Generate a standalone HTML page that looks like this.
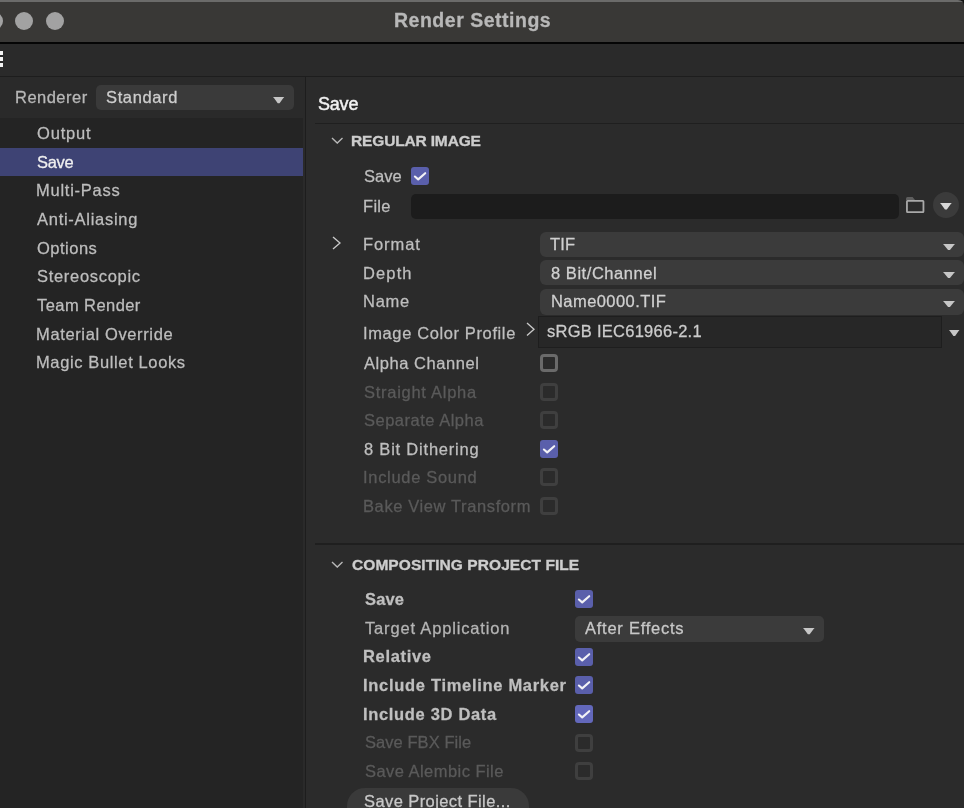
<!DOCTYPE html>
<html><head><meta charset="utf-8"><title>Render Settings</title>
<style>
html,body{margin:0;padding:0;width:964px;height:808px;overflow:hidden;background:#2b2b2b;}
body{position:relative;font-family:"Liberation Sans",sans-serif;}
.t{position:absolute;white-space:nowrap;-webkit-text-stroke:0.28px currentColor;will-change:transform;}
.b{position:absolute;display:block;}
</style></head><body>
<div class="b" style="left:0px;top:0px;width:964px;height:42px;background:#393836;border-radius:0px;"></div>
<div class="b" style="left:0px;top:0px;width:964px;height:2px;background:#6b6b6a;border-radius:0px;"></div>
<svg class="b" style="left:958px;top:0px" width="6" height="6"><path d="M0,0 L6,0 L6,6 Q6,0 0,0 Z" fill="#111"/></svg>
<div class="b" style="left:-15px;top:12px;width:18px;height:18px;background:#a2a2a2;border-radius:9px;"></div>
<div class="b" style="left:15px;top:12px;width:18px;height:18px;background:#a2a2a2;border-radius:9px;"></div>
<div class="b" style="left:45.7px;top:12px;width:18px;height:18px;background:#a2a2a2;border-radius:9px;"></div>
<div class="t" style="left:394.28px;top:9.24px;font-size:19.5px;line-height:23.4px;letter-spacing:0.51px;color:#b8b8b8;font-weight:700;">Render Settings</div>
<div class="b" style="left:0px;top:42px;width:964px;height:2px;background:#050505;border-radius:0px;"></div>
<div class="b" style="left:0px;top:44px;width:964px;height:32px;background:#2a2a2a;border-radius:0px;"></div>
<div class="b" style="left:0px;top:51.2px;width:3px;height:3.5px;background:#f2f2f2;border-radius:0px;"></div>
<div class="b" style="left:0px;top:57.2px;width:3px;height:3.5px;background:#f2f2f2;border-radius:0px;"></div>
<div class="b" style="left:0px;top:63.2px;width:3px;height:3.5px;background:#f2f2f2;border-radius:0px;"></div>
<div class="b" style="left:0px;top:76px;width:964px;height:1px;background:#1d1d1d;border-radius:0px;"></div>
<div class="b" style="left:0px;top:77px;width:305px;height:731px;background:#2a2a2a;border-radius:0px;"></div>
<div class="b" style="left:0px;top:118px;width:303px;height:690px;background:#242424;border-radius:0px;"></div>
<div class="b" style="left:305px;top:77px;width:1px;height:731px;background:#1d1d1d;border-radius:0px;"></div>
<div class="t" style="left:14.96px;top:87.68px;font-size:16.5px;line-height:19.8px;letter-spacing:0.48px;color:#b8b8b8;font-weight:400;">Renderer</div>
<div class="b" style="left:96px;top:84.7px;width:198px;height:25.8px;background:#3a3a3a;border-radius:5px;"></div>
<div class="t" style="left:106.48px;top:87.88px;font-size:16.5px;line-height:19.8px;letter-spacing:0.62px;color:#cdcdcd;font-weight:400;">Standard</div>
<svg class="b" style="left:272.4px;top:96px" width="13.3" height="8.2"><polygon points="1.00,1.00 12.30,1.00 11.17,2.24 7.55,7.20 5.75,7.20 2.13,2.24" fill="#c6c6c6"/></svg>
<div class="b" style="left:0px;top:148px;width:303px;height:27.5px;background:#3e4374;border-radius:0px;"></div>
<div class="t" style="left:37.16px;top:124.08px;font-size:16.5px;line-height:19.8px;letter-spacing:0.808px;color:#bdbdbd;font-weight:400;">Output</div>
<div class="t" style="left:37.16px;top:152.73px;font-size:16.5px;line-height:19.8px;letter-spacing:-0.293px;color:#f0f0f0;font-weight:400;">Save</div>
<div class="t" style="left:36.04px;top:181.38px;font-size:16.5px;line-height:19.8px;letter-spacing:0.749px;color:#bdbdbd;font-weight:400;">Multi-Pass</div>
<div class="t" style="left:37.44px;top:210.03px;font-size:16.5px;line-height:19.8px;letter-spacing:0.722px;color:#bdbdbd;font-weight:400;">Anti-Aliasing</div>
<div class="t" style="left:37.44px;top:238.68px;font-size:16.5px;line-height:19.8px;letter-spacing:0.5px;color:#bdbdbd;font-weight:400;">Options</div>
<div class="t" style="left:37.44px;top:267.33px;font-size:16.5px;line-height:19.8px;letter-spacing:0.691px;color:#bdbdbd;font-weight:400;">Stereoscopic</div>
<div class="t" style="left:37.44px;top:295.98px;font-size:16.5px;line-height:19.8px;letter-spacing:0.43px;color:#bdbdbd;font-weight:400;">Team Render</div>
<div class="t" style="left:36.04px;top:324.63px;font-size:16.5px;line-height:19.8px;letter-spacing:0.631px;color:#bdbdbd;font-weight:400;">Material Override</div>
<div class="t" style="left:36.04px;top:353.28px;font-size:16.5px;line-height:19.8px;letter-spacing:0.624px;color:#bdbdbd;font-weight:400;">Magic Bullet Looks</div>
<div class="b" style="left:306px;top:77px;width:658px;height:731px;background:#2b2b2b;border-radius:0px;"></div>
<div class="t" style="left:318.46px;top:93.76px;font-size:18px;line-height:21.6px;letter-spacing:-0.2px;color:#f2f2f2;font-weight:400;-webkit-text-stroke:0.45px currentColor;">Save</div>
<div class="b" style="left:315px;top:122.5px;width:649px;height:1.5px;background:#1f1f1f;border-radius:0px;"></div>
<svg class="b" style="left:331.1px;top:137.3px" width="12.5" height="7.1"><polyline points="1,1 6.25,6.1 11.5,1" fill="none" stroke="#b8b8b8" stroke-width="1.35"/></svg>
<div class="t" style="left:351.44px;top:132.23px;font-size:15.5px;line-height:18.6px;letter-spacing:-0.153px;color:#cdcdcd;font-weight:700;-webkit-text-stroke:0.35px currentColor;">REGULAR IMAGE</div>
<div class="t" style="left:364.16px;top:166.58px;font-size:16.5px;line-height:19.8px;letter-spacing:0.033px;color:#bebebe;font-weight:400;">Save</div>
<svg class="b" style="left:411px;top:166.5px" width="18" height="18"><rect x="0" y="0" width="18" height="18" rx="3" fill="#5a5fab"/><polyline points="3.9,9.5 7.2,12.4 14.2,6.2" fill="none" stroke="#f2f2f6" stroke-width="2.1" stroke-linecap="round" stroke-linejoin="round"/></svg>
<div class="t" style="left:363.46px;top:196.58px;font-size:16.5px;line-height:19.8px;letter-spacing:0.313px;color:#bebebe;font-weight:400;">File</div>
<div class="b" style="left:411px;top:194px;width:487.5px;height:25px;background:#1c1c1c;border-radius:5px;"></div>
<svg class="b" style="left:904px;top:195px" width="24" height="20"><path d="M2,5.2 L2,3.6 Q2,2.1 3.5,2.1 L8.6,2.1 L11.2,5.2 Z" fill="#5e5e5e"/><rect x="2.95" y="5.9" width="16.5" height="11.2" rx="0.6" fill="none" stroke="#a9a9a9" stroke-width="1.8"/></svg>
<div class="b" style="left:932.9000000000001px;top:191.7px;width:26.6px;height:26.6px;background:#3b3b3b;border-radius:13.3px;"></div>
<svg class="b" style="left:939.4px;top:201.6px" width="13.8" height="8.6"><polygon points="1.00,1.00 12.80,1.00 11.62,2.32 7.84,7.60 5.96,7.60 2.18,2.32" fill="#d8d8d8"/></svg>
<svg class="b" style="left:332.1px;top:235.5px" width="9" height="14"><polyline points="1,1 8,7.0 1,13" fill="none" stroke="#c8c8c8" stroke-width="1.35"/></svg>
<div class="t" style="left:363.12px;top:234.88px;font-size:16.5px;line-height:19.8px;letter-spacing:0.92px;color:#bebebe;font-weight:400;">Format</div>
<div class="b" style="left:540px;top:231.8px;width:424px;height:24.899999999999977px;background:#3b3b3b;border-radius:6px;"></div>
<div class="t" style="left:550.0px;top:234.88px;font-size:16.5px;line-height:19.8px;letter-spacing:0.22px;color:#d0d0d0;font-weight:400;">TIF</div>
<svg class="b" style="left:942px;top:242.8px" width="14" height="8.1"><polygon points="1.00,1.00 13.00,1.00 11.80,2.22 7.96,7.10 6.04,7.10 2.20,2.22" fill="#c6c6c6"/></svg>
<div class="t" style="left:363.12px;top:263.58px;font-size:16.5px;line-height:19.8px;letter-spacing:1.13px;color:#bebebe;font-weight:400;">Depth</div>
<div class="b" style="left:540px;top:260.2px;width:424px;height:25.30000000000001px;background:#3b3b3b;border-radius:6px;"></div>
<div class="t" style="left:550.66px;top:263.58px;font-size:16.5px;line-height:19.8px;letter-spacing:0.547px;color:#d0d0d0;font-weight:400;">8 Bit/Channel</div>
<svg class="b" style="left:942px;top:271.2px" width="14" height="8.1"><polygon points="1.00,1.00 13.00,1.00 11.80,2.22 7.96,7.10 6.04,7.10 2.20,2.22" fill="#c6c6c6"/></svg>
<div class="t" style="left:363.12px;top:291.88px;font-size:16.5px;line-height:19.8px;letter-spacing:0.733px;color:#bebebe;font-weight:400;">Name</div>
<div class="b" style="left:540px;top:289px;width:424px;height:25.5px;background:#3b3b3b;border-radius:6px;"></div>
<div class="t" style="left:550.62px;top:291.88px;font-size:16.5px;line-height:19.8px;letter-spacing:0.436px;color:#d0d0d0;font-weight:400;">Name0000.TIF</div>
<svg class="b" style="left:942px;top:300px" width="14" height="8.1"><polygon points="1.00,1.00 13.00,1.00 11.80,2.22 7.96,7.10 6.04,7.10 2.20,2.22" fill="#c6c6c6"/></svg>
<div class="t" style="left:363.3px;top:323.78px;font-size:16.5px;line-height:19.8px;letter-spacing:0.617px;color:#bebebe;font-weight:400;">Image Color Profile</div>
<svg class="b" style="left:526.3px;top:321.8px" width="9" height="14.5"><polyline points="1,1 8,7.25 1,13.5" fill="none" stroke="#c8c8c8" stroke-width="1.35"/></svg>
<div class="b" style="left:538.3px;top:316.3px;width:404.2px;height:31.3px;background:#272727;border-radius:0px;box-sizing:border-box;border:1.7px solid #1e1e1e;"></div>
<div class="t" style="left:546.5px;top:322.48px;font-size:16.5px;line-height:19.8px;letter-spacing:0.264px;color:#cccccc;font-weight:400;">sRGB IEC61966-2.1</div>
<svg class="b" style="left:947.8px;top:329px" width="12.5" height="7.8999999999999995"><polygon points="1.00,1.00 11.50,1.00 10.45,2.18 7.09,6.90 5.41,6.90 2.05,2.18" fill="#c6c6c6"/></svg>
<div class="t" style="left:363.66px;top:353.98px;font-size:16.5px;line-height:19.8px;letter-spacing:0.547px;color:#bebebe;font-weight:400;">Alpha Channel</div>
<svg class="b" style="left:540px;top:354.0px" width="18" height="18"><rect x="1.5" y="1.5" width="15" height="15" rx="2.5" fill="none" stroke="#6a6a6a" stroke-width="3"/></svg>
<div class="t" style="left:363.66px;top:382.60px;font-size:16.5px;line-height:19.8px;letter-spacing:0.726px;color:#5a5a5a;font-weight:400;">Straight Alpha</div>
<svg class="b" style="left:540px;top:382.62px" width="18" height="18"><rect x="1.5" y="1.5" width="15" height="15" rx="2.5" fill="none" stroke="#3f3f3f" stroke-width="3"/></svg>
<div class="t" style="left:363.66px;top:411.22px;font-size:16.5px;line-height:19.8px;letter-spacing:0.5px;color:#5a5a5a;font-weight:400;">Separate Alpha</div>
<svg class="b" style="left:540px;top:411.24px" width="18" height="18"><rect x="1.5" y="1.5" width="15" height="15" rx="2.5" fill="none" stroke="#3f3f3f" stroke-width="3"/></svg>
<div class="t" style="left:363.66px;top:439.84px;font-size:16.5px;line-height:19.8px;letter-spacing:0.79px;color:#bebebe;font-weight:400;">8 Bit Dithering</div>
<svg class="b" style="left:540px;top:439.86px" width="18" height="18"><rect x="0" y="0" width="18" height="18" rx="3" fill="#5a5fab"/><polyline points="3.9,9.5 7.2,12.4 14.2,6.2" fill="none" stroke="#f2f2f6" stroke-width="2.1" stroke-linecap="round" stroke-linejoin="round"/></svg>
<div class="t" style="left:362.96px;top:468.46px;font-size:16.5px;line-height:19.8px;letter-spacing:0.687px;color:#5a5a5a;font-weight:400;">Include Sound</div>
<svg class="b" style="left:540px;top:468.48px" width="18" height="18"><rect x="1.5" y="1.5" width="15" height="15" rx="2.5" fill="none" stroke="#3f3f3f" stroke-width="3"/></svg>
<div class="t" style="left:362.96px;top:497.08px;font-size:16.5px;line-height:19.8px;letter-spacing:0.609px;color:#5a5a5a;font-weight:400;">Bake View Transform</div>
<svg class="b" style="left:540px;top:497.1px" width="18" height="18"><rect x="1.5" y="1.5" width="15" height="15" rx="2.5" fill="none" stroke="#3f3f3f" stroke-width="3"/></svg>
<div class="b" style="left:315px;top:543px;width:649px;height:1.6px;background:#1f1f1f;border-radius:0px;"></div>
<svg class="b" style="left:331.1px;top:560.6px" width="12.5" height="7.1"><polyline points="1,1 6.25,6.1 11.5,1" fill="none" stroke="#b8b8b8" stroke-width="1.35"/></svg>
<div class="t" style="left:352.16px;top:555.63px;font-size:15.5px;line-height:18.6px;letter-spacing:0.068px;color:#cdcdcd;font-weight:700;-webkit-text-stroke:0.35px currentColor;">COMPOSITING PROJECT FILE</div>
<div class="t" style="left:364.68px;top:589.88px;font-size:16.5px;line-height:19.8px;letter-spacing:0.127px;color:#bfbfbf;font-weight:700;">Save</div>
<svg class="b" style="left:574.5px;top:590.2px" width="18" height="18"><rect x="0" y="0" width="18" height="18" rx="3" fill="#5a5fab"/><polyline points="3.9,9.5 7.2,12.4 14.2,6.2" fill="none" stroke="#f2f2f6" stroke-width="2.1" stroke-linecap="round" stroke-linejoin="round"/></svg>
<div class="t" style="left:364.68px;top:618.55px;font-size:16.5px;line-height:19.8px;letter-spacing:0.829px;color:#b4b4b4;font-weight:400;">Target Application</div>
<div class="b" style="left:574.5px;top:616px;width:249.5px;height:25.5px;background:#3b3b3b;border-radius:5px;"></div>
<div class="t" style="left:585.32px;top:619.38px;font-size:16.5px;line-height:19.8px;letter-spacing:0.745px;color:#c8c8c8;font-weight:400;">After Effects</div>
<svg class="b" style="left:802.4px;top:627px" width="13.6" height="8.2"><polygon points="1.00,1.00 12.60,1.00 11.44,2.24 7.73,7.20 5.87,7.20 2.16,2.24" fill="#c6c6c6"/></svg>
<div class="t" style="left:363.28px;top:647.22px;font-size:16.5px;line-height:19.8px;letter-spacing:0.68px;color:#bfbfbf;font-weight:700;">Relative</div>
<svg class="b" style="left:574.5px;top:647.5400000000001px" width="18" height="18"><rect x="0" y="0" width="18" height="18" rx="3" fill="#5a5fab"/><polyline points="3.9,9.5 7.2,12.4 14.2,6.2" fill="none" stroke="#f2f2f6" stroke-width="2.1" stroke-linecap="round" stroke-linejoin="round"/></svg>
<div class="t" style="left:363.28px;top:675.89px;font-size:16.5px;line-height:19.8px;letter-spacing:0.697px;color:#bfbfbf;font-weight:700;">Include Timeline Marker</div>
<svg class="b" style="left:574.5px;top:676.21px" width="18" height="18"><rect x="0" y="0" width="18" height="18" rx="3" fill="#5a5fab"/><polyline points="3.9,9.5 7.2,12.4 14.2,6.2" fill="none" stroke="#f2f2f6" stroke-width="2.1" stroke-linecap="round" stroke-linejoin="round"/></svg>
<div class="t" style="left:363.28px;top:704.56px;font-size:16.5px;line-height:19.8px;letter-spacing:0.67px;color:#bfbfbf;font-weight:700;">Include 3D Data</div>
<svg class="b" style="left:574.5px;top:704.8800000000001px" width="18" height="18"><rect x="0" y="0" width="18" height="18" rx="3" fill="#6368bb"/><polyline points="3.9,9.5 7.2,12.4 14.2,6.2" fill="none" stroke="#f2f2f6" stroke-width="2.1" stroke-linecap="round" stroke-linejoin="round"/></svg>
<div class="t" style="left:364.68px;top:733.23px;font-size:16.5px;line-height:19.8px;letter-spacing:0.057px;color:#5a5a5a;font-weight:400;">Save FBX File</div>
<svg class="b" style="left:574.5px;top:733.5500000000001px" width="18" height="18"><rect x="1.5" y="1.5" width="15" height="15" rx="2.5" fill="none" stroke="#3f3f3f" stroke-width="3"/></svg>
<div class="t" style="left:364.68px;top:761.90px;font-size:16.5px;line-height:19.8px;letter-spacing:0.448px;color:#5a5a5a;font-weight:400;">Save Alembic File</div>
<svg class="b" style="left:574.5px;top:762.22px" width="18" height="18"><rect x="1.5" y="1.5" width="15" height="15" rx="2.5" fill="none" stroke="#3f3f3f" stroke-width="3"/></svg>
<div class="b" style="left:347.4px;top:788px;width:181.5px;height:40px;background:#3a3a3a;border-radius:18px;"></div>
<div class="t" style="left:364.34px;top:791.58px;font-size:16.5px;line-height:19.8px;letter-spacing:0.412px;color:#c8c8c8;font-weight:400;">Save Project File...</div>
</body></html>
